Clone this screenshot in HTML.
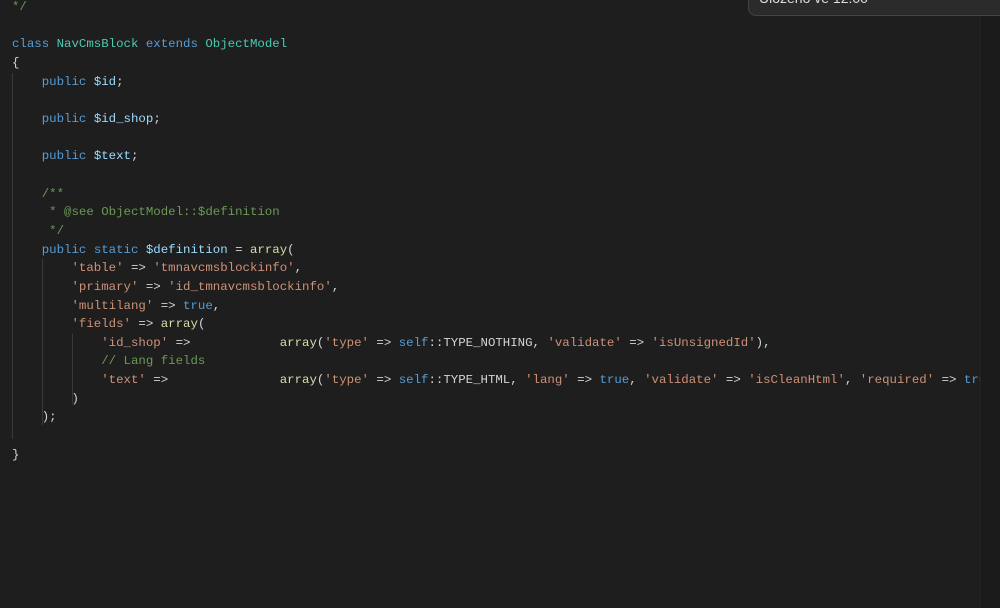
<!DOCTYPE html>
<html><head><meta charset="utf-8"><style>
html,body{margin:0;padding:0;background:#1e1e1e;width:1000px;height:608px;overflow:hidden;position:relative}
pre{margin:0;position:absolute;left:12px;top:-2px;font-family:"Liberation Mono",monospace;font-size:12.4px;line-height:18.65px;color:#d4d4d4;white-space:pre}
.k{color:#569cd6}.c{color:#4ec9b0}.v{color:#9cdcfe}.s{color:#ce9178}.f{color:#dcdcaa}.m{color:#6a9955}
.guide{position:absolute;width:1px;background:#3a3a3a}
.mini{position:absolute;left:980px;top:0;width:20px;height:608px;background:#1b1b1b;border-left:1px solid #222}
.tip{position:absolute;left:748px;top:-20px;width:270px;height:36px;background:#2b2b2b;border:1px solid #444;border-radius:8px;color:#ddd;font-family:"Liberation Sans",sans-serif;font-size:14px;box-sizing:border-box;padding:10px 0 0 10px;line-height:14px}
</style></head><body>
<div class="guide" style="left:12px;top:73px;height:366px"></div>
<div class="guide" style="left:42px;top:259px;height:166px"></div>
<div class="guide" style="left:72px;top:334px;height:70px"></div>
<pre><span class="m">*/</span>

<span class="k">class</span> <span class="c">NavCmsBlock</span> <span class="k">extends</span> <span class="c">ObjectModel</span>
{
    <span class="k">public</span> <span class="v">$id</span>;

    <span class="k">public</span> <span class="v">$id_shop</span>;

    <span class="k">public</span> <span class="v">$text</span>;

    <span class="m">/**</span>
<span class="m">     * @see ObjectModel::$definition</span>
<span class="m">     */</span>
    <span class="k">public</span> <span class="k">static</span> <span class="v">$definition</span> = <span class="f">array</span>(
        <span class="s">'table'</span> =&gt; <span class="s">'tmnavcmsblockinfo'</span>,
        <span class="s">'primary'</span> =&gt; <span class="s">'id_tmnavcmsblockinfo'</span>,
        <span class="s">'multilang'</span> =&gt; <span class="k">true</span>,
        <span class="s">'fields'</span> =&gt; <span class="f">array</span>(
            <span class="s">'id_shop'</span> =&gt;            <span class="f">array</span>(<span class="s">'type'</span> =&gt; <span class="k">self</span>::TYPE_NOTHING, <span class="s">'validate'</span> =&gt; <span class="s">'isUnsignedId'</span>),
            <span class="m">// Lang fields</span>
            <span class="s">'text'</span> =&gt;               <span class="f">array</span>(<span class="s">'type'</span> =&gt; <span class="k">self</span>::TYPE_HTML, <span class="s">'lang'</span> =&gt; <span class="k">true</span>, <span class="s">'validate'</span> =&gt; <span class="s">'isCleanHtml'</span>, <span class="s">'required'</span> =&gt; <span class="k">true</span>),
        )
    );

}</pre>
<div class="mini"></div>
<div class="tip">Uloženo ve 12:00</div>
</body></html>
